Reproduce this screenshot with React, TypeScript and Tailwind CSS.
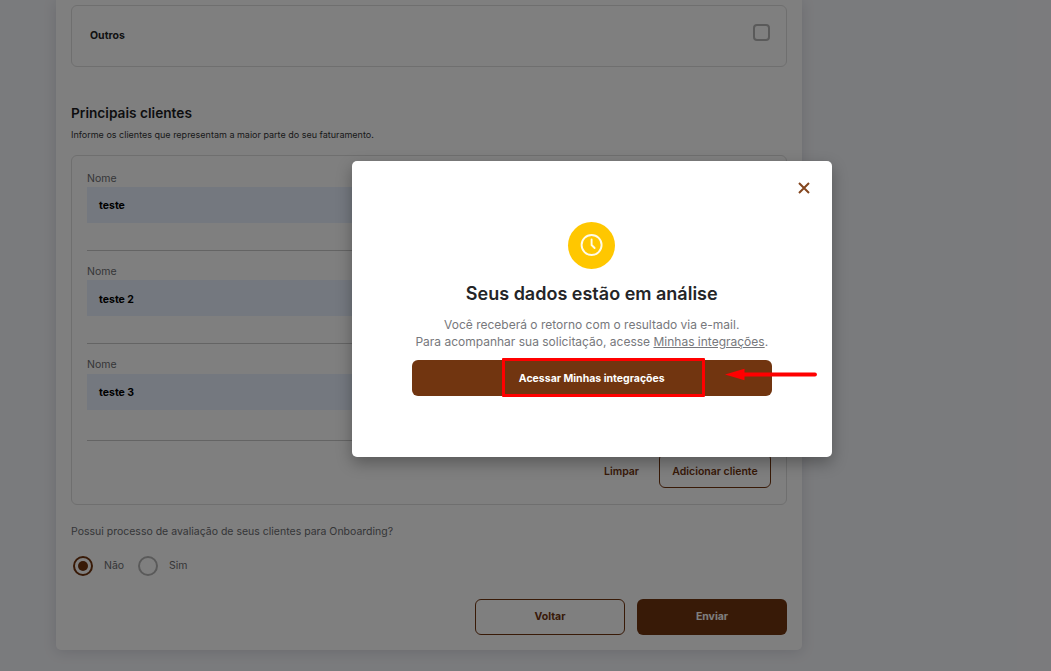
import React from "react";

const clients = [
  { name: "teste", gap: "mb-[27px]" },
  { name: "teste 2", gap: "mb-[27px]" },
  { name: "teste 3", gap: "mb-[30.5px]" },
];

function ClientRow({ name, gap }: { name: string; gap: string }) {
  return (
    <div className="border-b border-[#c8c8c8] pt-[12.5px]">
      <div className="h-[16.7px] text-[10.5px] leading-[15px] text-[#6b6c70]">Nome</div>
      <div className={`flex h-[36px] items-center bg-[#e8f0fe] pl-3 pt-[2px] text-[10.5px] font-bold text-black ${gap}`}>
        {name}
      </div>
    </div>
  );
}

function Radio({ label, checked }: { label: string; checked?: boolean }) {
  return (
    <div className="flex w-[65px] items-center gap-[11px]">
      <span
        className={`flex h-5 w-5 items-center justify-center rounded-full border-2 ${
          checked ? "border-[#71340f]" : "border-[#b5b5b5]"
        }`}
      >
        {checked && <span className="h-[10px] w-[10px] rounded-full bg-[#71340f]" />}
      </span>
      <span className="text-[10.5px] text-[#6b6c70]">{label}</span>
    </div>
  );
}

function Modal() {
  return (
    <div className="absolute left-[352px] top-[161px] flex h-[296px] w-[479.5px] flex-col items-center rounded-[5px] bg-white shadow-[0_6px_16px_rgba(0,0,0,0.3)]">
      <div className="flex h-[61px] w-full justify-end pr-[21.5px] pt-[21px]">
        <svg width="12" height="12" viewBox="0 0 12 12" stroke="#84461f" strokeWidth="2">
          <path d="M1 1 11 11M11 1 1 11" />
        </svg>
      </div>
      <div className="flex h-[47px] w-[47px] shrink-0 items-center justify-center rounded-full bg-[#ffc700]">
        <svg className="-mt-px" width="24" height="24" viewBox="0 0 24 24" fill="none" stroke="#fffbe9" strokeWidth="1.9" strokeLinecap="round">
          <circle cx="11.6" cy="12" r="10" />
          <path d="M11.6 6.4v5.6l3 3" />
        </svg>
      </div>
      <h2 className="mt-[13px] whitespace-nowrap text-[18px] font-semibold leading-[24px] text-[#242527]">
        Seus dados estão em análise
      </h2>
      <p className="mt-[10px] whitespace-nowrap text-center text-[12px] leading-[17px] text-[#77787c]">
        Você receberá o retorno com o resultado via e-mail.
        <br />
        Para acompanhar sua solicitação, acesse <a className="underline">Minhas integrações</a>.
      </p>
      <button className="mt-[10px] h-[36px] w-[360px] rounded-[6px] bg-[#713510] pt-[2px] text-[10.5px] font-bold text-white">
        Acessar Minhas integrações
      </button>
      <div className="absolute left-[150px] top-[197px] h-[39px] w-[203px] rounded-[1px] border-[3px] border-[#ff0000]" />
      <svg className="absolute left-[372px] top-[206px]" width="94" height="15" viewBox="0 0 94 15">
        <path d="M20 7.5H91" stroke="#ff0000" strokeWidth="3.8" strokeLinecap="round" />
        <path d="M1 7.5 20.5 1.7V13.3Z" fill="#ff0000" />
      </svg>
    </div>
  );
}

export default function App() {
  return (
    <div className="relative h-[671px] w-[1051px] overflow-hidden bg-[#f5f6fa] font-['Inter',sans-serif]">
      <main className="ml-[56px] h-[649.5px] w-[746.4px] rounded-b-[5px] bg-white pl-[15px] pr-[15.4px] pt-[5px] shadow-[0_2px_14px_rgba(30,30,60,0.14)]">
        <div className="flex h-[61.5px] items-start justify-between rounded-[6px] border border-[#dedede] pl-[18px] pr-[16px] pt-[18px]">
          <span className="mt-[3.5px] text-[10.5px] font-bold leading-[16px] text-[#242527]">Outros</span>
          <span className="h-[17px] w-[17px] rounded-[4px] border-2 border-[#b5b5b5]" />
        </div>
        <h1 className="mt-[36px] text-[13.7px] font-semibold leading-[20px] text-[#1c1d1f]">Principais clientes</h1>
        <p className="mt-[5px] text-[9px] leading-[13px] text-[#333436]">
          Informe os clientes que representam a maior parte do seu faturamento.
        </p>
        <section className="mt-[14px] h-[350.5px] rounded-[6px] border border-[#dedede] px-[15px] pt-[2.5px]">
          {clients.map((c) => (
            <ClientRow key={c.name} name={c.name} gap={c.gap} />
          ))}
          <div className="mt-[12px] flex items-center justify-end gap-5 text-[10.5px] font-semibold text-[#71340f]">
            <span className="pt-[2px]">Limpar</span>
            <button className="h-[35px] w-[112px] rounded-[6px] border border-[#71340f] pt-[2px]">Adicionar cliente</button>
          </div>
        </section>
        <p className="mt-[17.5px] text-[10.5px] leading-[17px] text-[#6b6c70]">
          Possui processo de avaliação de seus clientes para Onboarding?
        </p>
        <div className="ml-[2px] mt-[16px] flex">
          <Radio label="Não" checked />
          <Radio label="Sim" />
        </div>
        <div className="mt-[23px] flex justify-end gap-3 text-[10.5px] font-bold">
          <button className="h-[36px] w-[150px] rounded-[6px] border border-[#71340f] text-[#71340f]">Voltar</button>
          <button className="h-[36px] w-[150px] rounded-[6px] bg-[#71340f] text-white">Enviar</button>
        </div>
      </main>
      <div className="absolute inset-0 bg-black/50" />
      <Modal />
    </div>
  );
}
